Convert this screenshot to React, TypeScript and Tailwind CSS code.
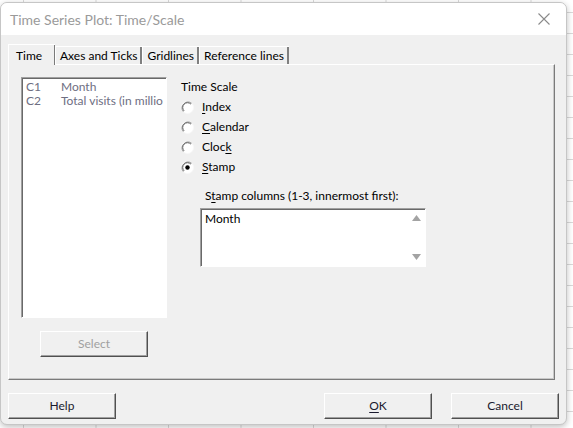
import React from 'react';

const font = { fontFamily: 'Lato, "Noto Sans", sans-serif' };

// classic 3D bevels
const raised = 'border border-t-white border-l-white border-r-[#505050] border-b-[#505050] shadow-[inset_-1px_-1px_0_#a0a0a0]';
const sunken = 'border border-t-[#a0a0a0] border-l-[#a0a0a0] border-r-white border-b-white shadow-[inset_1px_1px_0_#696969]';

const Radio = ({ checked }: { checked?: boolean }) => (
  <svg width="13" height="13" viewBox="0 0 13 13" className="shrink-0">
    <circle cx="6.5" cy="6.5" r="6" fill="#fff" stroke="#f8f8f8" strokeWidth="1" />
    <path d="M10.7 2.3 A6 6 0 0 0 2.3 10.7" fill="none" stroke="#a0a0a0" strokeWidth="1" />
    <path d="M9.9 3.1 A4.8 4.8 0 0 0 3.1 9.9" fill="none" stroke="#5a5a5a" strokeWidth="1" />
    {checked && <circle cx="6.5" cy="6.5" r="2.2" fill="#000" />}
  </svg>
);

const RadioRow = ({ label, checked }: { label: React.ReactNode; checked?: boolean }) => (
  <div className="flex h-[20px] items-center gap-[8px]">
    <Radio checked={checked} />
    <span className="text-[12px] text-black">{label}</span>
  </div>
);

const Button = ({ children, disabled, className = '' }: { children: React.ReactNode; disabled?: boolean; className?: string }) => (
  <div
    className={`flex h-[26px] w-[108px] items-center justify-center bg-[#f0f0f0] text-[12px] ${raised} ${
      disabled ? 'text-[#a0a0a0]' : 'text-[#1a1a2e]'
    } ${className}`}
  >
    {children}
  </div>
);

const tabs = ['Axes and Ticks', 'Gridlines', 'Reference lines'];

export default function App() {
  return (
    <div
      className="h-[428px] w-[573px] overflow-hidden bg-white bg-[linear-gradient(to_right,#d9d9d9_1px,transparent_1px),linear-gradient(to_bottom,#d9d9d9_1px,transparent_1px)] bg-[size:72.5px_21px] bg-[position:23px_12px] pt-[2px]"
      style={font}
    >
      <div className="flex h-[423px] w-[567px] flex-col overflow-hidden rounded-[7px] border border-[#c6c6c6] bg-[#f0f0f0] shadow-[0_2px_6px_rgba(0,0,0,0.25)]">
        {/* title bar */}
        <div className="flex h-[32px] shrink-0 items-center justify-between bg-white pl-[9px] pr-[16px]">
          <span className="text-[14px] text-[#9a9a9a]">Time Series Plot: Time/Scale</span>
          <svg width="12" height="12" viewBox="0 0 12 12">
            <path d="M0.5 0.5 L11.5 11.5 M11.5 0.5 L0.5 11.5" stroke="#8a8a8a" strokeWidth="1.1" />
          </svg>
        </div>

        <div className="flex flex-col px-[7px] pt-[9px]">
          {/* tab strip */}
          <div className="flex h-[20px] items-end">
            <div className="relative z-10 -mb-[1px] flex h-[21px] w-[47px] items-start border-l border-t border-l-white border-t-white bg-[#f0f0f0] pl-[7px] pt-[2px] text-[12px] text-black shadow-[inset_-1px_0_0_#7a7a7a]">
              Time
            </div>
            {tabs.map((t) => (
              <div
                key={t}
                className="flex h-[18px] items-center border-l border-t border-l-white border-t-white pl-[4px] pr-[5px] text-[12px] text-black shadow-[inset_-2px_0_0_#808080]"
              >
                {t}
              </div>
            ))}
          </div>

          {/* tab panel */}
          <div className="flex h-[316px] w-[547px] border border-t-white border-l-white border-r-[#7a7a7a] border-b-[#7a7a7a] shadow-[inset_-1px_-1px_0_#c8c8c8] pl-[12px] pt-[12px]">
            <div className="flex flex-col">
              <div className={`flex h-[241px] w-[146px] flex-col bg-white pl-[4px] pt-[2px] text-[12px] leading-[14px] text-[#6e6e82] ${sunken}`}>
                <div className="flex">
                  <span className="w-[35px]">C1</span>
                  <span>Month</span>
                </div>
                <div className="flex overflow-hidden whitespace-nowrap">
                  <span className="w-[35px] shrink-0">C2</span>
                  <span>Total visits (in millio</span>
                </div>
              </div>
              <Button disabled className="ml-[19px] mt-[13px]">
                Select
              </Button>
            </div>

            <div className="ml-[14px] flex flex-col">
              <div className="flex h-[20px] items-center text-[12px] text-black">Time Scale</div>
              <RadioRow label={<><u className="underline-offset-2">I</u>ndex</>} />
              <RadioRow label={<><u className="underline-offset-2">C</u>alendar</>} />
              <RadioRow label={<>Cloc<u className="underline-offset-2">k</u></>} />
              <RadioRow checked label={<><u className="underline-offset-2">S</u>tamp</>} />

              <div className="ml-[24px] mt-[10px] text-[12px] text-black">
                S<u className="underline-offset-2">t</u>amp columns (1-3, innermost first):
              </div>
              <div className={`ml-[19px] mt-[3px] flex h-[59px] w-[226px] bg-white ${sunken}`}>
                <div className="flex-1 pl-[4px] pt-[1px] text-[12px] text-black">Month</div>
                <div className="flex w-[17px] flex-col items-center justify-between py-[6px]">
                  <svg width="9" height="6" viewBox="0 0 9 6">
                    <path d="M4.5 0 L9 6 L0 6 Z" fill="#a3a3a3" />
                  </svg>
                  <svg width="9" height="6" viewBox="0 0 9 6">
                    <path d="M0 0 L9 0 L4.5 6 Z" fill="#a3a3a3" />
                  </svg>
                </div>
              </div>
            </div>
          </div>

          {/* dialog buttons */}
          <div className="mt-[13px] flex">
            <Button>Help</Button>
            <Button className="ml-[208px]">
              <u className="underline-offset-2">O</u>K
            </Button>
            <Button className="ml-[19px]">Cancel</Button>
          </div>
        </div>
      </div>
    </div>
  );
}
